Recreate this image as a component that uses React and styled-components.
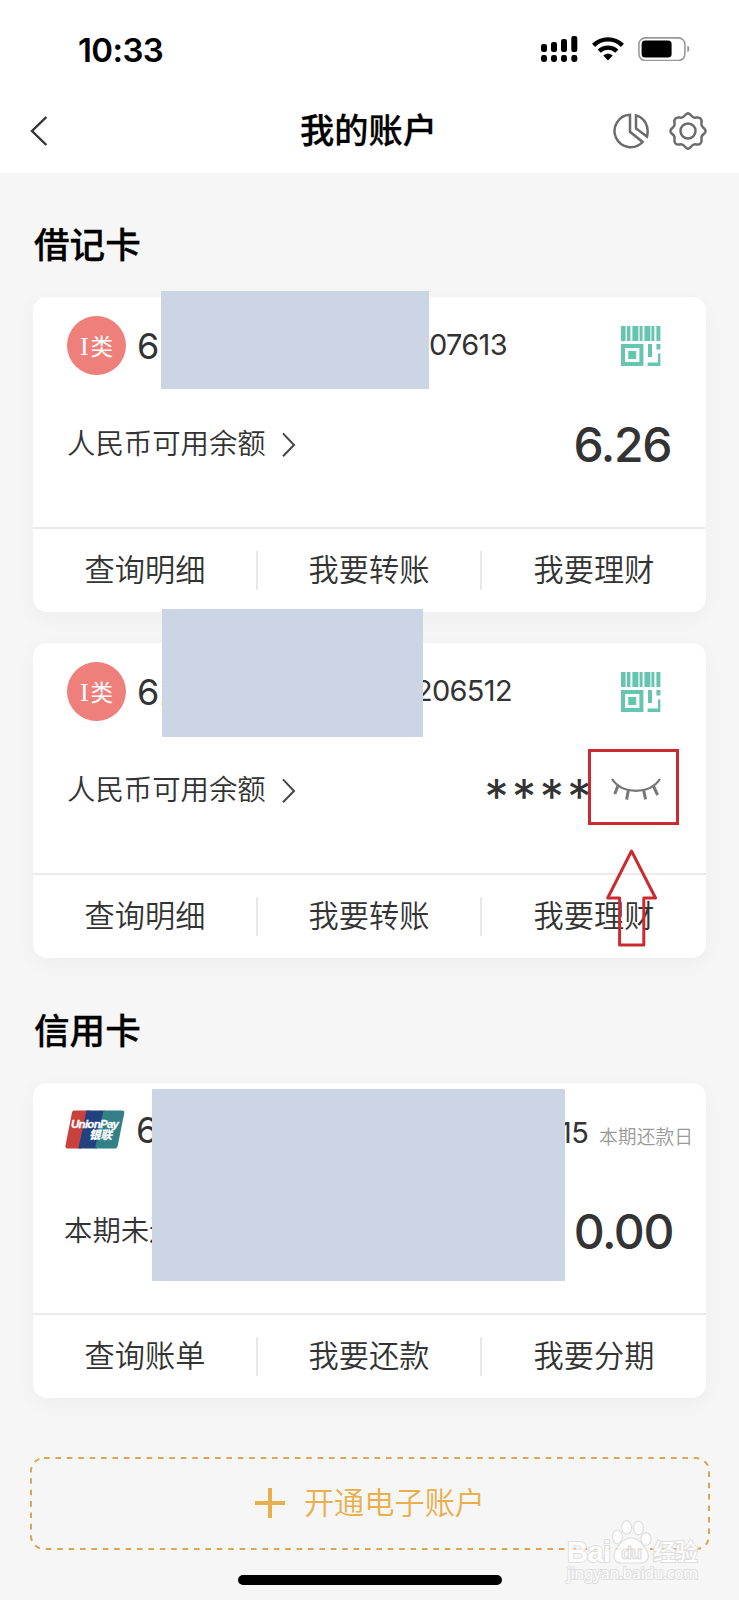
import styled, { createGlobalStyle } from 'styled-components';


const debitCards = [
  { lead: '6', tail: '07613', tailGap: 259, balance: '6.26', mask: { left: 128, top: -6, width: 268, height: 98 } },
  { lead: '62', tail: '206512', tailGap: 245, hidden: true, mask: { left: 129, top: -34, width: 261, height: 128 } },
]

const debitActions = ['查询明细', '我要转账', '我要理财']
const creditActions = ['查询账单', '我要还款', '我要分期']

const SignalIcon = () => (
  <svg width="38" height="28" viewBox="0 0 38 28">
    <rect x="1" y="9" width="6" height="8" rx="2.2" />
    <rect x="11" y="7" width="6" height="10" rx="2.2" />
    <rect x="21" y="4" width="6" height="13" rx="2.2" />
    <rect x="31.3" y="1" width="6" height="16" rx="2.2" />
    <rect x="1" y="20" width="6" height="7" rx="2.4" />
    <rect x="11" y="20" width="6" height="7" rx="2.4" />
    <rect x="21" y="20" width="6" height="7" rx="2.4" />
    <rect x="31.3" y="20" width="6" height="7" rx="2.4" />
  </svg>
)

const WifiIcon = () => (
  <svg width="32" height="26" viewBox="0 0 32 26" fill="none" stroke="#000" strokeWidth="4.4">
    <path d="M1.6 9.4C9.6 1.4 22.4 1.4 30.4 9.4" />
    <path d="M7.2 15.2C12.2 10.4 19.8 10.4 24.8 15.2" />
    <path d="M11.3 19.6C14 17.2 18 17.2 20.7 19.6L16 24.6Z" fill="#000" stroke="none" />
  </svg>
)

const BatteryIcon = () => (
  <svg width="52" height="24" viewBox="0 0 52 24">
    <rect x="0.9" y="0.9" width="46" height="22.6" rx="6.5" fill="none" stroke="#999" strokeWidth="1.6" />
    <rect x="3.6" y="3.6" width="30" height="17" rx="3.6" />
    <path d="M49.3 8.6C52 9.6 52 14.4 49.3 15.4Z" fill="#999" />
  </svg>
)

const BackIcon = () => (
  <svg width="18" height="32" viewBox="0 0 18 32" fill="none" stroke="#333" strokeWidth="2.4">
    <path d="M16.4 2L2 16L16.4 30" />
  </svg>
)

const PieIcon = () => (
  <svg width="36" height="36" viewBox="0 0 36 36" fill="none" stroke="#6b6b6b" strokeWidth="2.5">
    <path d="M17 1.8A16.2 16.2 0 1 0 29.6 29L17 18.8Z" />
    <path d="M23 2.4V15.4L34 23.6C36.4 13.6 32 5 23 2.4Z" />
  </svg>
)

const GearIcon = () => (
  <svg width="38" height="38" viewBox="0 0 38 38" fill="none" stroke="#6b6b6b" strokeWidth="2.5" strokeLinejoin="round">
    <path d="M19 1.3C21.6 1.5 22 4.4 24.6 5.4C27.2 6.4 29.4 4 31.5 6.5C34 8.6 31.6 10.8 32.6 13.4C33.6 16 36.5 16.4 36.7 19C36.5 21.6 33.6 22 32.6 24.6C31.6 27.2 34 29.4 31.5 31.5C29.4 34 27.2 31.6 24.6 32.6C22 33.6 21.6 36.5 19 36.7C16.4 36.5 16 33.6 13.4 32.6C10.8 31.6 8.6 34 6.5 31.5C4 29.4 6.4 27.2 5.4 24.6C4.4 22 1.5 21.6 1.3 19C1.5 16.4 4.4 16 5.4 13.4C6.4 10.8 4 8.6 6.5 6.5C8.6 4 10.8 6.4 13.4 5.4C16 4.4 16.4 1.5 19 1.3Z" />
    <circle cx="19" cy="19" r="7.5" />
  </svg>
)

const CodeIcon = () => (
  <svg width="40" height="40" viewBox="0 0 40 40" fill="#66c5b0">
    <path d="M0 0h4.6v15H0zM6 0h3.4v15H6zM11.4 0h6v15h-6zM18.6 0h3v15h-3zM23.4 0h6v15h-6zM30.4 0h3v15h-3zM35.4 0h4v15h-4z" />
    <path fillRule="evenodd" d="M0 18h22.4v22H0zM4 22v14h14.4V22z" />
    <rect x="7.2" y="25" width="8" height="8" />
    <path d="M27 18h4v13h-4zM35.4 18h4v5.4h-4zM37 27.4h2.4V40H26.6v-3.4H37z" />
  </svg>
)

const ChevronIcon = () => (
  <svg width="14" height="26" viewBox="0 0 14 26" fill="none" stroke="#444" strokeWidth="2">
    <path d="M1 2.4L12 14L1 25.2" />
  </svg>
)

const ClosedEyeIcon = () => (
  <svg width="50" height="24" viewBox="0 0 50 24" fill="none" stroke="#777" strokeWidth="2.2">
    <path d="M1 1C6 8.6 15 12.8 25 12.8S44 8.6 49 1" />
    <path d="M6.8 8L3.8 16M17.4 12.2L15.6 21.6M32.6 12.2L34.6 21.4M42.6 8.4L46.6 17" strokeWidth="3" />
  </svg>
)

const UnionPayLogo = () => (
  <svg width="60" height="40" viewBox="0 0 60 40">
    <path d="M9.5 0.5H25L16.5 38.5H3C1 38.5 0 37.4 0.5 35.4L7 2.5C7.4 1 8.2 0.5 9.5 0.5Z" fill="#c8413c" />
    <path d="M21.5 0.5H40L32 38.5H13.4Z" fill="#21427f" />
    <path d="M38.5 0.5H57C59 0.5 59.6 1.6 59.2 3.4L52.6 36.2C52.2 37.8 51 38.5 49.6 38.5H30Z" fill="#338086" />
    <g fill="#fff" stroke="#fff" strokeWidth="0.3" fontFamily="'Liberation Sans', sans-serif" fontWeight="700" fontStyle="italic">
      <text x="6" y="18" fontSize="11.5" textLength="48">UnionPay</text>
      <text x="24" y="29.2" fontSize="11.5" fontFamily="'Noto Sans CJK SC', sans-serif" textLength="23">银联</text>
    </g>
  </svg>
)

const ArrowMark = () => (
  <svg width="52" height="100" viewBox="0 0 52 100" fill="none" stroke="#cb2a30" strokeWidth="3" strokeLinejoin="round">
    <path d="M25.5 2L49.5 49H37.8V96H13.6V49H1.7Z" />
  </svg>
)

const PawMark = () => (
  <svg width="136" height="68" viewBox="0 0 136 68" fill="#fff" stroke="#dcdcdc" strokeWidth="1.2">
    <g fontFamily="'Liberation Sans', 'Noto Sans CJK SC', sans-serif" fontWeight="700" paintOrder="stroke" strokeWidth="2">
      <text x="2" y="43.6" fontSize="29" textLength="44">Bai</text>
      <text x="88" y="42" fontSize="23" fontWeight="500" fontFamily="'Noto Sans CJK SC', sans-serif" textLength="45">经验</text>
      <text x="2" y="60.6" fontSize="15.5" fontWeight="400" fontFamily="'Noto Sans', sans-serif" textLength="131">jingyan.baidu.com</text>
    </g>
    <ellipse cx="52.4" cy="19" rx="5" ry="6.8" />
    <ellipse cx="61.6" cy="9.4" rx="5" ry="6.8" />
    <ellipse cx="73.4" cy="10" rx="5" ry="6.8" />
    <ellipse cx="81" cy="21" rx="5" ry="6.4" />
    <path d="M66 20C57 20 49 32 49 38C49 44 54 46 60 45H73C80 46 84 42 83.4 37C82 31 75 20 66 20Z" />
    <text x="56" y="41" fontSize="18" fontWeight="700" fontFamily="'Liberation Sans', sans-serif" textLength="21">du</text>
  </svg>
)

const DashedOutline = () => (
  <svg width="680" height="93" viewBox="0 0 680 93" fill="none" stroke="#d9a655" strokeWidth="2">
    <rect x="1" y="1" width="678" height="91" rx="13" strokeDasharray="5.6 5.8" />
  </svg>
)

function Actions({ items }) {
  return (
    <ActionBar>
      {items.map((item) => <Action key={item}><Label>{item}</Label></Action>)}
    </ActionBar>
  )
}

function DebitCard({ card }) {
  return (
    <Card>
      <CardBody>
        <CardHead>
          <Badge><Roman>I</Roman>类</Badge>
          <Lead>{card.lead}</Lead>
          <Tail $gap={card.tailGap}>{card.tail}</Tail>
          <CodeIcon />
        </CardHead>
        <BalanceRow>
          <BalanceLabel><Label>人民币可用余额</Label><ChevronIcon /></BalanceLabel>
          {card.hidden
            ? <HiddenBalance><Stars>****</Stars><ClosedEyeIcon /></HiddenBalance>
            : <Balance>{card.balance}</Balance>}
        </BalanceRow>
      </CardBody>
      <Actions items={debitActions} />
      <Mask $box={card.mask} />
      {card.hidden && <Highlight />}
      {card.hidden && <Pointer><ArrowMark /></Pointer>}
    </Card>
  )
}

function App() {
  return (
    <Page>
      <GlobalStyle />
      <TopArea>
        <StatusBar>
          <Clock>10:33</Clock>
          <StatusIcons>
            <SignalIcon />
            <WifiIcon />
            <BatteryIcon />
          </StatusIcons>
        </StatusBar>
        <NavBar>
          <NavSide><BackIcon /></NavSide>
          <Title>我的账户</Title>
          <NavSide $end><PieIcon /><GearIcon /></NavSide>
        </NavBar>
      </TopArea>
      <Content>
        <SectionTitle $height={124} $drop={14}>借记卡</SectionTitle>
        <CardList>
          {debitCards.map((card) => <DebitCard key={card.tail} card={card} />)}
        </CardList>
        <SectionTitle $height={125} $drop={15}>信用卡</SectionTitle>
        <Card>
          <CardBody>
            <CardHead $credit>
              <UnionPayLogo />
              <Lead>6</Lead>
              <Tail $credit>15</Tail>
              <DueDate>本期还款日</DueDate>
            </CardHead>
            <BalanceRow $credit>
              <BalanceLabel><Label>本期未还</Label></BalanceLabel>
              <Balance>0.00</Balance>
            </BalanceRow>
          </CardBody>
          <Actions items={creditActions} />
          <Mask $box={{ left: 119, top: 6, width: 413, height: 192 }} />
        </Card>
        <OpenButton>
          <Outline><DashedOutline /></Outline>
          <Plus />
          <Label>开通电子账户</Label>
        </OpenButton>
      </Content>
      <HomeIndicator />
      <Watermark><PawMark /></Watermark>
    </Page>
  )
}

const GlobalStyle = createGlobalStyle`
  body {
    margin: 0;
    background-color: #f6f6f6;
  }
  * {
    box-sizing: border-box;
  }
  svg {
    display: block;
    flex-shrink: 0;
  }
`

const Page = styled.div`
  position: relative;
  display: flex;
  flex-direction: column;
  width: 739px;
  height: 1600px;
  overflow: hidden;
  background-color: #f6f6f6;
  color: #333333;
  font-family: Inter, 'Noto Sans CJK SC', sans-serif;
`

const TopArea = styled.header`
  height: 173px;
  background-color: #ffffff;
`

const StatusBar = styled.div`
  display: flex;
  justify-content: space-between;
  align-items: center;
  height: 98px;
  padding: 0 49px 0 78px;
`

const Clock = styled.div`
  padding-top: 1px;
  color: #000000;
  font-size: 33px;
  font-weight: 600;
  letter-spacing: -0.6px;
`

const StatusIcons = styled.div`
  display: flex;
  align-items: center;
  gap: 14px;
`

const NavBar = styled.nav`
  display: flex;
  justify-content: space-between;
  align-items: center;
  height: 66px;
  padding: 0 32px 0 30px;
`

const NavSide = styled.div`
  display: flex;
  align-items: center;
  justify-content: ${props => props.$end ? 'flex-end' : 'flex-start'};
  gap: 20px;
  width: 100px;
`

const Title = styled.h1`
  margin: 0;
  color: #000000;
  font-size: 34.2px;
  font-weight: 500;
  line-height: 40px;
  -webkit-text-stroke: 0.3px #000000;
`

const Content = styled.main`
  display: flex;
  flex-direction: column;
  padding: 0 33px;
`

const SectionTitle = styled.h2`
  display: flex;
  align-items: center;
  height: ${props => props.$height}px;
  margin: 0;
  padding: ${props => props.$drop}px 0 0 1px;
  color: #000000;
  font-size: 35.6px;
  font-weight: 500;
  -webkit-text-stroke: 0.3px #000000;
`

const CardList = styled.div`
  display: flex;
  flex-direction: column;
  gap: 31px;
`

const Card = styled.section`
  position: relative;
  height: 315px;
  border-radius: 14px;
  background-color: #ffffff;
  box-shadow: 0 6px 24px rgba(0, 0, 0, 0.04);
`

const CardBody = styled.div`
  display: flex;
  flex-direction: column;
  height: 232px;
  border-bottom: 2px solid #ebebeb;
`

const CardHead = styled.div`
  display: flex;
  align-items: center;
  height: 97px;
  padding: ${props => props.$credit ? '0 13px 3px 32px' : '0 45px 0 34px'};
`

const Badge = styled.div`
  display: flex;
  align-items: center;
  justify-content: center;
  width: 59px;
  height: 59px;
  padding-top: 2px;
  border-radius: 50%;
  background-color: #ef7f7a;
  color: #ffffff;
  font-size: 22.5px;
  line-height: 24px;
`

const Roman = styled.span`
  margin-right: 2px;
  font-family: 'Liberation Serif', serif;
  font-size: 26px;
`

const Label = styled.span`
  padding-bottom: 5px;
  font-weight: 350;
`

const Lead = styled.span`
  width: 44px;
  padding-left: 11px;
  font-size: 36px;
  font-weight: 400;
`

const Tail = styled.span`
  flex: 1;
  padding: ${props => props.$credit ? '5px 0 0' : `0 0 2px ${props.$gap}px`};
  text-align: ${props => props.$credit ? 'right' : 'left'};
  font-size: 29px;
  font-weight: 380;
  letter-spacing: -0.7px;
`

const DueDate = styled.span`
  margin: 11px 0 0 11px;
  color: #999999;
  font-size: 18.8px;
  font-weight: 350;
`

const BalanceRow = styled.div`
  display: flex;
  align-items: center;
  justify-content: space-between;
  height: 100px;
  padding: ${props => props.$credit ? '2px 33px 0 31px' : '0 35px 0 34px'};
`

const BalanceLabel = styled.div`
  display: flex;
  align-items: center;
  gap: 16px;
  font-size: 28.4px;
`

const Balance = styled.div`
  font-size: 48px;
  font-weight: 550;
  letter-spacing: -1.4px;
`

const HiddenBalance = styled.div`
  display: flex;
  align-items: center;
  gap: 16px;
  margin-right: 10px;
`

const Stars = styled.span`
  padding-top: 12px;
  font-size: 48px;
  font-weight: 400;
  letter-spacing: 3.6px;
`

const ActionBar = styled.div`
  display: grid;
  grid-template-columns: 1fr 1fr 1fr;
  align-items: center;
  height: 83px;
  padding-left: 1px;
`

const Action = styled.div`
  display: flex;
  align-items: center;
  justify-content: center;
  height: 39px;
  border-right: 2px solid #e8e8e8;
  font-size: 30.2px;

  &:last-child {
    border-right: none;
  }
`

const Mask = styled.div`
  position: absolute;
  left: ${props => props.$box.left}px;
  top: ${props => props.$box.top}px;
  width: ${props => props.$box.width}px;
  height: ${props => props.$box.height}px;
  background-color: #cbd5e4;
`

const Highlight = styled.div`
  position: absolute;
  left: 555px;
  top: 106px;
  width: 91px;
  height: 76px;
  border: 3px solid #cb2a30;
`

const Pointer = styled.div`
  position: absolute;
  left: 573px;
  top: 206px;
`

const OpenButton = styled.button`
  position: relative;
  display: flex;
  align-items: center;
  justify-content: center;
  gap: 19px;
  height: 93px;
  margin: 59px -4px 0 -3px;
  padding: 0;
  border: none;
  background: none;
  color: #e8af4c;
  font-family: inherit;
  font-size: 30.2px;
`

const Outline = styled.span`
  position: absolute;
  top: 0;
  left: -0.5px;
`

const Plus = styled.span`
  width: 30px;
  height: 30px;
  margin-bottom: 1px;
  background:
    linear-gradient(#e8af4c, #e8af4c) center / 30px 4px no-repeat,
    linear-gradient(#e8af4c, #e8af4c) center / 4px 30px no-repeat;
`

const HomeIndicator = styled.div`
  width: 264px;
  height: 10px;
  margin: 25px auto 0;
  border-radius: 5px;
  background-color: #000000;
`

const Watermark = styled.div`
  position: absolute;
  left: 565px;
  top: 1518px;
  opacity: 0.85;
`

export default App
